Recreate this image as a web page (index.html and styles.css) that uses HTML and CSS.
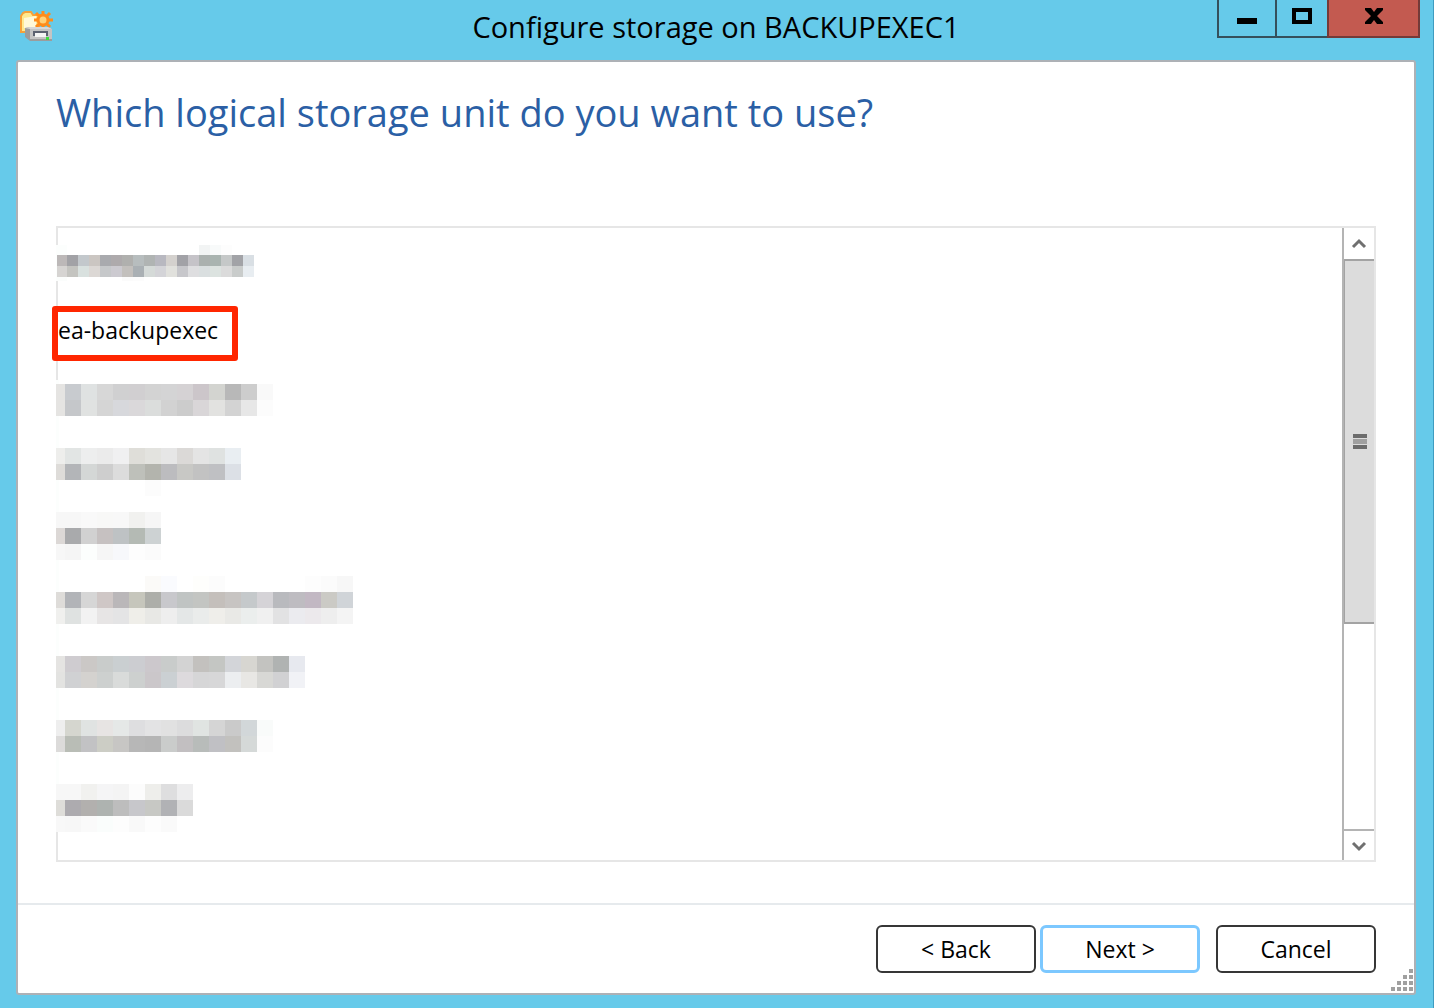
FILE: index.html
```html
<!DOCTYPE html>
<html lang="en">

<head>
  <meta charset="utf-8">
  <title>Configure storage on BACKUPEXEC1</title>
  <link rel="stylesheet" href="styles.css">
</head>

<body>
  <div class="window">
    <header class="titlebar">
      <svg class="app-icon" width="34" height="32" viewBox="0 0 34 32">
        <path d="M1 21V5l2-3 2-1h6l2 3h6v17z" fill="#ffe98f" stroke="#f5a13a" stroke-width="2" />
        <path d="M4 17V7l12-2v12z" fill="#fff8d8" />
        <g stroke="#ff8c1a" stroke-width="3">
          <path d="M23 0v19M14 9h19M16 2l14 14M30 2L16 16" />
          <circle cx="23" cy="9" r="5" fill="#ffd27a" />
        </g>
        <path d="M5 17l5-1h18l4 2v12H10l-5-4z" fill="#9c9c9c" />
        <path d="M5 17l5-1h18l4 2H10z" fill="#d8d8d8" />
        <path d="M10 18h22v10H10z" fill="#c4c4c4" />
        <path d="M13 20h15v5H13z" fill="#5c6170" />
        <path d="M15 22h11v4H15z" fill="#f4f4f4" />
        <path d="M26 26h3v3h-3z" fill="#3be03b" />
      </svg>
      <h1 class="caption">Configure storage on BACKUPEXEC1</h1>
      <div class="controls">
        <button class="control minimize" type="button" aria-label="Minimize">
          <svg width="20" height="16"><path d="M0 8h20v6H0z" /></svg>
        </button>
        <button class="control maximize" type="button" aria-label="Maximize">
          <svg width="20" height="16"><path d="M2 2h16v12H2z" fill="none" stroke="#000" stroke-width="4" /></svg>
        </button>
        <button class="control close" type="button" aria-label="Close">
          <svg width="20" height="16"><path d="M1 0h6l3 4 3-4h6v2l-6 6 6 6v2h-6l-3-4-3 4H1v-2l6-6-6-6z" /></svg>
        </button>
      </div>
    </header>

    <main class="panel">
      <h2 class="question">Which logical storage unit do you want to use?</h2>

      <div class="list-box">
        <ul class="units">
          <li><svg class="masked" data-unit="0"></svg></li>
          <li class="marked">ea-backupexec</li>
          <li><svg class="masked" data-unit="1"></svg></li>
          <li><svg class="masked" data-unit="2"></svg></li>
          <li><svg class="masked" data-unit="3"></svg></li>
          <li><svg class="masked" data-unit="4"></svg></li>
          <li><svg class="masked" data-unit="5"></svg></li>
          <li><svg class="masked" data-unit="6"></svg></li>
          <li><svg class="masked" data-unit="7"></svg></li>
        </ul>
        <div class="scrollbar">
          <button class="arrow" type="button" aria-label="Scroll up">
            <svg width="16" height="12"><path d="M2 9l6-6 6 6" /></svg>
          </button>
          <div class="track">
            <div class="thumb"><span class="grip"></span></div>
          </div>
          <button class="arrow down" type="button" aria-label="Scroll down">
            <svg width="16" height="12"><path d="M2 3l6 6 6-6" /></svg>
          </button>
        </div>
      </div>

      <footer class="actions">
        <button class="btn" type="button">&lt; Back</button>
        <button class="btn btn-default" type="button">Next &gt;</button>
        <button class="btn btn-cancel" type="button">Cancel</button>
      </footer>

      <svg class="resize-grip" width="22" height="22" fill="#a0a0a0">
        <path d="M18 0h4v4h-4zM12 6h4v4h-4zM18 6h4v4h-4zM6 12h4v4H6zM12 12h4v4h-4zM18 12h4v4h-4zM0 18h4v4H0zM6 18h4v4H6zM12 18h4v4h-4zM18 18h4v4h-4z" />
      </svg>
    </main>
  </div>
  <script src="units.js"></script>
</body>

</html>
```

FILE: units.js
```js
// Hidden unit names, drawn as blocks of colour.
// cover: part of the list edge that is hidden too, as [top, height]
// rows: [top, height, colours from left to right]
var units = [
  { first: 10, cell: 11, left: 1, cover: [17, 36], rows: [
    [17, 10, 'fcfefd - - - - - - - - - - - - f2f4f4 f8fafa fdfdfd'],
    [27, 11, 'bcb8b8 a2a2a6 c3c8cc cbc6c2 a9aaae aeaaac b0b0ae b7bdbe b0b4b3 b8b8c0 d4d1ce a2a2a7 c5c3c8 abb1af a9b4b0 c5c8c8 a2a3a7 d9dfe4'],
    [38, 11, 'd6d4d2 c4c4c0 d9e1df dcd8d5 c6c8ca cccad0 c3c0bd aab0b4 d5dad8 d4d4d8 e1e1dd c7c7cb dedee0 dadfe0 dce3e0 dbdbdb c9cccb e8edf1'],
    [49, 4, 'fbfdfc - - - - - fbfbfb fcfcfc']
  ] },
  { first: 9, cell: 16, left: 0, cover: [16, 52], rows: [
    [20, 16, 'e5e4e2 c8cbcf dfe2e2 d7d7d7 d0d0d1 d1cfd1 d3d3d3 d4d4d5 d5d2d4 ccc6ca d3d4d0 b8b8b8 cdcdcd f9f9f9'],
    [36, 16, 'e5e4e2 c5c7ca e0e2e1 d5d5d5 d7d8dc dad8da dbdddc d2d2d2 cccccc d9d6d8 e2e2e0 d3d3d3 e7e7e7 fcfcfc']
  ] },
  { first: 9, cell: 16, left: 0, cover: [0, 68], rows: [
    [16, 16, 'eeeeec e2e5e4 edeeee ebebeb f0f0f1 dfded9 e3e3df e6e6e6 dbd9d7 e4e4e4 dfe2e1 e9eef2'],
    [32, 16, 'dedcd9 b3b5b8 d4d7d6 cecece dcdcdc bec0ba b3b4ad bcbcbf c8c8c5 c2c2c2 bfc0c3 dce0e6'],
    [48, 16, '- - - - - - fcfcfc']
  ] },
  { first: 9, cell: 16, left: 0, cover: [0, 68], rows: [
    [12, 16, 'f7f7f7 f7f7f7 f9f9f9 f8f8f7 f8f8f8 f1f1ef f6f6f6'],
    [28, 16, 'dcd8d6 a9aaac d1d1d1 c6c1c1 bec2c4 b4bab4 cdd2d3'],
    [44, 16, 'f7f7f7 f5f5f5 fcfefd f6f6f6 f7f8fb fdfdfd fbfbfb']
  ] },
  { first: 9, cell: 16, left: 0, cover: [0, 68], rows: [
    [8, 16, '- - - - - - fbfaf8 fafbfe - fefefc fcfcfc - - - - - fdfdfd fbfbfb f7f7f7'],
    [24, 16, 'dedcd9 b2b4b8 d6d6d6 cfc7c6 bab7b9 c6c6bc adaea9 c8c8cc c0c4c3 c3c5c2 c4bfbb c7c4c2 c5c9cb d5d3d7 b9babe bebcc1 c2b8c3 cbcac5 d0d4d8'],
    [40, 16, 'f0f0ee dfe2e1 f2f2f2 e7e5e5 e4e4e5 efeee9 e8e8e5 eeeeee e4e7e7 eaeceb efeeea e9e9e6 ebeeed f0f0f0 e2e2e3 ebebef ece9ec eeeeee f4f4f4']
  ] },
  { first: 9, cell: 16, left: 0, cover: [0, 68], rows: [
    [20, 16, 'e5e4e2 cfccd0 cbc8c6 c9cccb cacfd1 cccdd1 ccc8cc c9cccb d3d3d3 c3c1be c4c6c3 d3d5d9 d7d6d1 c3c3c0 b0b3b2 e7e9ef'],
    [36, 16, 'e3e3e1 d0d1d3 d4d2cf cdd0cf d9dbda cdd0cf cbc7ca cbd0d3 dddadd d6d6d7 d7d7d8 eceef0 e8e7e4 d8d8d5 d1d1d3 f1f2f6']
  ] },
  { first: 9, cell: 16, left: 0, cover: [0, 68], rows: [
    [16, 16, 'eeeeee d5d6cf e0e3e2 e7e4e3 e5e8e7 dedee0 e3e3e4 e1e1e1 dcdcdd e0e4e2 d5d5d5 cacaca d2d7d9 f9fbfa'],
    [32, 16, 'dcdbda b9bdb6 c2c2c4 cccdc5 c7c6c4 b7b7b7 b5b5b5 cacccb c2bfc1 b8bcba c0c0c4 c2c1be d5d9d8 fcfcfc']
  ] },
  { first: 9, cell: 16, left: 0, cover: [0, 60], rows: [
    [12, 16, 'f7f7f7 f7f7f7 f1f1ef f5f5f6 f4f4f4 fcfcfc eeeeeb dededf ededee'],
    [28, 16, 'deddd9 adabaf b2b0ae aeb3b0 bdbdbd c7c7cb c7c8c4 b1b2b5 dadada'],
    [44, 16, 'f8f8f8 f7f7f7 fafafa fafdfc fdfdfd f9f9f9 fdfdfd fafafa']
  ] }
];

function addRect(svg, x, y, width, height, color) {
  var rect = document.createElementNS('http://www.w3.org/2000/svg', 'rect');
  rect.setAttribute('x', x);
  rect.setAttribute('y', y);
  rect.setAttribute('width', width);
  rect.setAttribute('height', height);
  rect.setAttribute('fill', color);
  svg.appendChild(rect);
}

document.querySelectorAll('.masked').forEach(function (svg) {
  var unit = units[svg.dataset.unit];
  addRect(svg, 0, unit.cover[0], 3, unit.cover[1], '#fcfefd');
  unit.rows.forEach(function (row) {
    var x = unit.left;
    row[2].split(' ').forEach(function (color, i) {
      var width = i === 0 ? unit.first : unit.cell;
      if (color !== '-') {
        addRect(svg, x, row[0], width, row[1], '#' + color);
      }
      x += width;
    });
  });
});
```

FILE: styles.css
```css
*,
*::after {
  box-sizing: border-box;
}

body {
  margin: 0;
  font-family: "Open Sans", "Noto Sans", sans-serif;
  font-size: 23px;
  color: #000;
  background: #66caea;
}

button {
  font-family: inherit;
  padding: 0;
  border: 0;
}

.window {
  display: flex;
  flex-direction: column;
  min-height: 100vh;
  padding: 0 17px 13px 16px;
  border-right: 1px solid #3f9cc0;
}

.titlebar {
  display: grid;
  grid-template-columns: 202px 1fr 202px;
  align-items: start;
  height: 60px;
}

.app-icon {
  margin: 11px 0 0 4px;
}

.caption {
  margin: 0;
  font-size: 29px;
  font-weight: 400;
  line-height: 54px;
  text-align: center;
  white-space: nowrap;
}

.controls {
  display: flex;
  justify-content: flex-end;
  margin-right: -4px;
}

.control {
  display: flex;
  justify-content: center;
  height: 38px;
  padding-top: 8px;
  background: #66caea;
  border: 2px solid #35505c;
  border-top: 0;
}

.minimize {
  width: 58px;
  padding-top: 10px;
  border-right: 0;
}

.maximize {
  width: 52px;
  border-right: 0;
}

.close {
  width: 93px;
  background: #c35a50;
  border-color: #743a38;
}

.panel {
  position: relative;
  display: flex;
  flex: 1;
  flex-direction: column;
  background: #fff;
  border: 2px solid #adb1b6;
  border-radius: 3px;
}

.question {
  margin: 0 38px;
  padding-top: 22px;
  height: 164px;
  font-size: 38px;
  font-weight: 400;
  line-height: 56px;
  color: #2b5fa5;
}

.list-box {
  display: flex;
  flex: 1;
  margin: 0 38px 41px;
  border: 2px solid #e6e6e6;
}

.units {
  flex: 1;
  margin: 0;
  padding: 0;
  list-style: none;
}

.units li {
  position: relative;
  height: 68px;
  line-height: 68px;
}

.masked {
  display: block;
  width: 320px;
  height: 68px;
  margin-left: -2px;
}

/* red frame round the unit to pick */
.marked::after {
  content: "";
  position: absolute;
  top: 10px;
  left: -6px;
  width: 186px;
  height: 55px;
  border: 6px solid #ff2600;
  border-radius: 3px;
}

.scrollbar {
  display: flex;
  flex-direction: column;
  width: 32px;
  border-left: 2px solid #b4b4b4;
}

.arrow {
  display: flex;
  align-items: center;
  justify-content: center;
  height: 31px;
  background: #fff;
}

.arrow path {
  fill: none;
  stroke: #707070;
  stroke-width: 3;
}

.down {
  border-top: 2px solid #b4b4b4;
}

.track {
  flex: 1;
}

.thumb {
  display: flex;
  align-items: center;
  justify-content: center;
  height: 64%;
  background: #dcdcdc;
  border: solid #a3a3a3;
  border-width: 2px 0 2px 1px;
}

.grip {
  width: 14px;
  height: 15px;
  background: #a0a0a0;
  border: solid #6c6c6c;
  border-width: 4px 0;
  box-shadow: inset 0 1px #dcdcdc, inset 0 -1px #dcdcdc;
}

.actions {
  display: flex;
  justify-content: flex-end;
  padding: 20px 38px;
  border-top: 2px solid #e6eaed;
}

.btn {
  width: 160px;
  height: 48px;
  font-size: 23px;
  color: #000;
  background: #fff;
  border: 2px solid #363636;
  border-radius: 6px;
}

.btn-default {
  margin-left: 4px;
  border: 3px solid #7cc8ff;
}

.btn-cancel {
  margin-left: 16px;
}

.resize-grip {
  position: absolute;
  right: 1px;
  bottom: 2px;
}
```
